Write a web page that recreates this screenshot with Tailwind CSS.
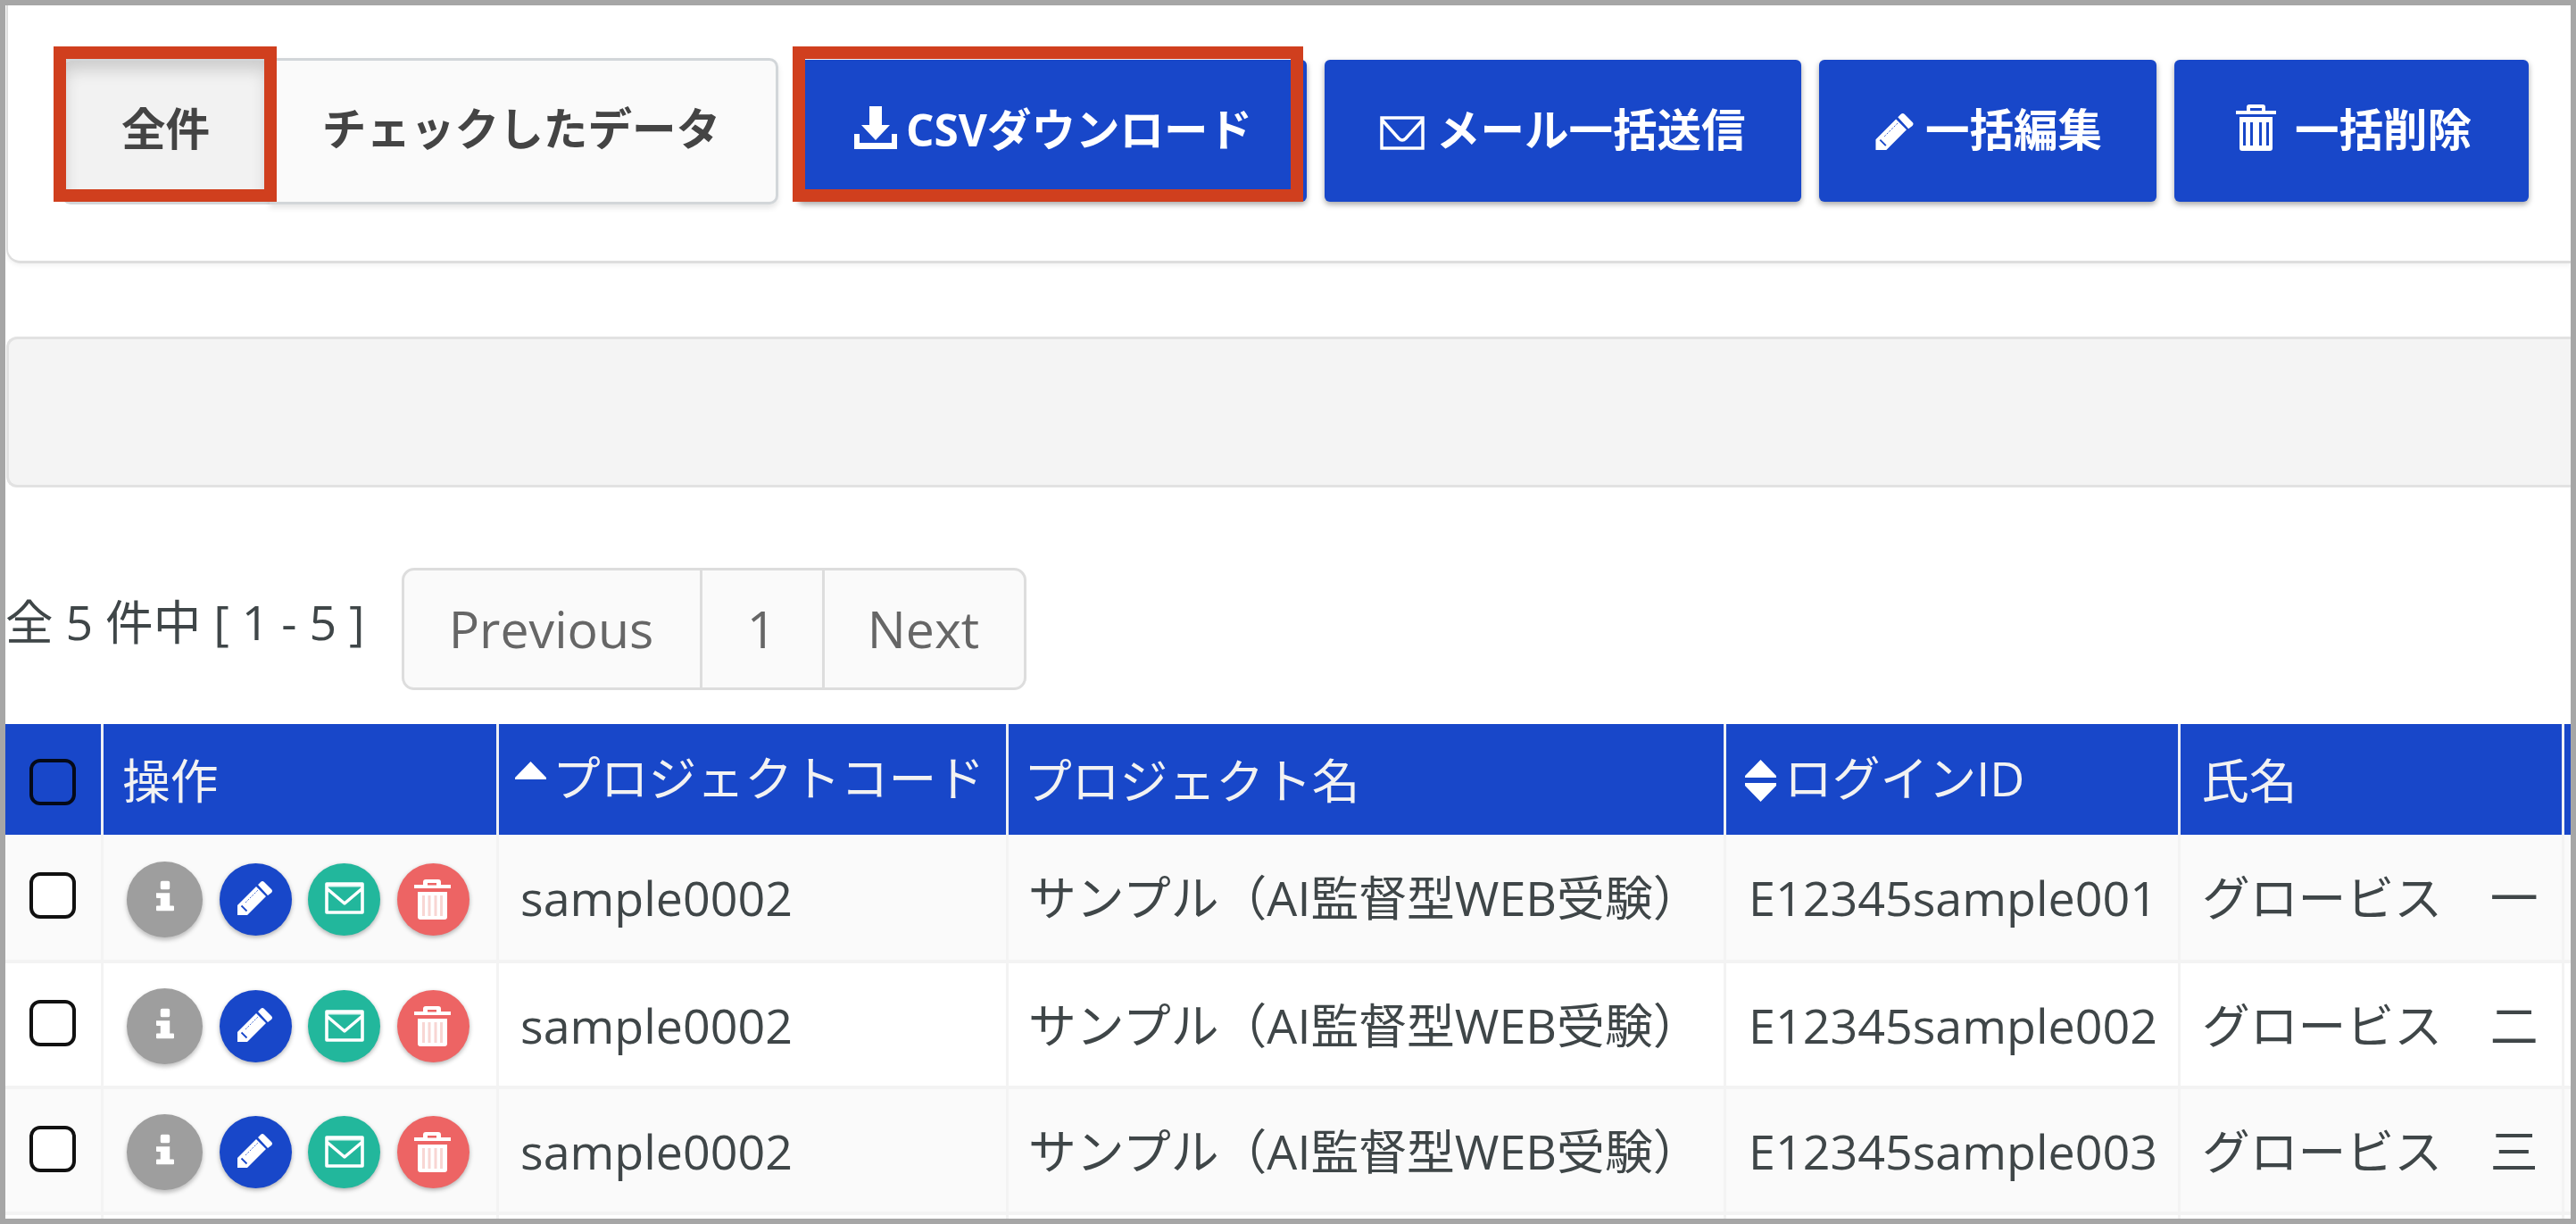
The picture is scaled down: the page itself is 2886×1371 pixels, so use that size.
<!DOCTYPE html>
<html lang="ja">
<head>
    <meta charset="UTF-8">
    <meta name="viewport" content="width=device-width, initial-scale=1.0">
    <title>受験者一覧</title>
    <script src="https://cdn.jsdelivr.net/npm/@tailwindcss/browser@4"></script>
    <style>
        body { font-family: 'Open Sans', 'Noto Sans CJK JP', sans-serif; }
    </style>
</head>
<body class="bg-white text-[#3f4648]">

    <svg class="hidden">
        <symbol id="icon-pencil" viewBox="0 0 39 38">
            <path fill="currentColor" d="M0 38V27L21 6l11 11L11 38zM23 4l3-3q2-2 4 0l8 8q2 2 0 4l-4 3z"/>
            <path fill="none" stroke="#1847c9" stroke-width="1.800" d="M4.500 27.500l6 6"/>
            <path fill="none" stroke="#1847c9" stroke-width=".8" stroke-dasharray="2 1.500" d="M9 24L23 10"/>
        </symbol>
        <symbol id="icon-mail" viewBox="0 0 44 36">
            <path fill="none" stroke="currentColor" stroke-width="3.600" stroke-linejoin="round" d="M2 2h40v32H2zM2 7l20 17L42 7"/>
            <path fill="currentColor" opacity=".85" d="M3 2h38v3.500H3z"/>
        </symbol>
        <symbol id="icon-trash" viewBox="0 0 41 45">
            <path fill="currentColor" d="M0 6h10V3q0-3 3-3h14q3 0 3 3v3h11v4H0zM15 4v2.500h10V4zM4 14h33v28q0 3-3 3H7q-3 0-3-3z" fill-rule="evenodd"/>
            <path stroke="#f8d6d3" stroke-width="3" d="M10.500 18v23M17 18v23M24 18v23M30.500 18v23"/>
        </symbol>
        <symbol id="icon-info" viewBox="0 0 21 35">
            <path fill="currentColor" d="M7 0h7q2 0 2 2v6q0 2-2 2H7q-2 0-2-2V2q0-2 2-2zM0 14h16v15h4q1 0 1 1v4q0 1-1 1H1q-1 0-1-1v-4q0-1 1-1h4v-9H1q-1 0-1-1z"/>
        </symbol>
    </svg>

    <div class="relative w-[2886px] h-[1371px] overflow-hidden border-6 border-[#a6a6a6]">

        <!-- Toolbar -->
        <div class="ml-px h-[289px] pt-[59px] pl-[60px] flex items-start rounded-bl-[16px] border-l-2 border-b-3 border-[#dedede] shadow-[0_2px_5px_rgba(0,0,0,0.06)]">
            <div class="flex w-[803px] h-[164px] mr-[22px] text-[49.600px] font-semibold text-[#444] leading-none whitespace-nowrap">
                <button class="w-[233px] h-full pb-[4px] bg-[#f2f2f2] border-3 border-[#d2d6d9] rounded-l-[10px] shadow-[inset_0_10px_18px_rgba(0,0,0,0.16)]">全件</button>
                <button class="flex-1 h-full pb-[4px] pr-[3px] bg-[#fafafa] border-3 border-l-0 border-[#d2d6d9] rounded-r-[10px] shadow-[0_4px_6px_rgba(0,0,0,0.10)]">チェックしたデータ</button>
            </div>
            <div class="flex gap-[20px] pt-[2px] text-[49.500px] font-bold text-white leading-none whitespace-nowrap">
                <button class="flex items-center w-[570px] h-[159px] pl-[63px] pb-[1px] bg-[#1847c9] rounded-[6px] shadow-[0_3px_6px_rgba(0,0,0,0.35)]">
                    <svg class="w-[48px] h-[48px] mr-[10px] -mt-[7px]" viewBox="0 0 48 48"><path fill="currentColor" d="M17 0h14v21h9L24 38 8 21h9zM0 31h6v10h36V31h6v17H0z"/></svg>CSVダウンロード
                </button>
                <button class="flex items-center w-[534px] h-[159px] pl-[62px] pb-[1px] bg-[#1847c9] rounded-[6px] shadow-[0_3px_6px_rgba(0,0,0,0.35)]">
                    <svg class="w-[50px] h-[38px] mr-[13px] mt-[5px]" viewBox="0 0 50 38"><path fill="none" stroke="currentColor" stroke-width="3.500" d="M2 2h46v34H2zM2 4l19 21q4 4 8 0L48 4"/></svg>メール一括送信
                </button>
                <button class="flex items-center w-[378px] h-[159px] pl-[62px] pb-[1px] bg-[#1847c9] rounded-[6px] shadow-[0_3px_6px_rgba(0,0,0,0.35)]">
                    <svg class="w-[45px] h-[41px] mr-[12px] mt-[2px]"><use href="#icon-pencil"/></svg>一括編集
                </button>
                <button class="flex items-center w-[397px] h-[159px] pl-[69px] pb-[1px] bg-[#1847c9] rounded-[6px] shadow-[0_3px_6px_rgba(0,0,0,0.35)]">
                    <svg class="w-[45px] h-[52px] mr-[21px] -mt-[7px]" viewBox="0 0 45 52"><path fill="currentColor" fill-rule="evenodd" d="M0 7h12V3q0-3 3-3h15q3 0 3 3v4h12v4H0zM16 4v3h13V4zM4 14h37v35q0 3-3 3H7q-3 0-3-3zM8 20v26h3V20zM16 20v26h3V20zM26 20v26h3V20zM34 20v26h3V20z"/></svg>一括削除
                </button>
            </div>
        </div>

        <!-- Filter bar -->
        <div class="mt-[82px] ml-px h-[169px] bg-[#f4f4f4] border-3 border-r-0 border-[#e2e2e2] rounded-l-[12px]"></div>

        <!-- Pager -->
        <div class="flex items-center mt-[90px] h-[137px]">
            <div class="w-[444px] pb-[15px] text-[53.600px] leading-none whitespace-nowrap">全 5 件中 [ 1 - 5 ]</div>
            <div class="flex h-full text-[57.200px] leading-none text-[#666] bg-[#fafafa] border-3 border-[#ddd] rounded-[14px]">
                <a class="flex items-center justify-center w-[334px] pr-[2px] border-r-3 border-[#ddd]">Previous</a>
                <a class="flex items-center justify-center w-[137px] pr-[2px] border-r-3 border-[#ddd]">1</a>
                <a class="flex items-center justify-center w-[223px] pr-[2px]">Next</a>
            </div>
        </div>

        <!-- Table -->
        <div class="mt-[38px] text-[53.800px] leading-none whitespace-nowrap">
            <div class="grid grid-cols-[110px_443px_571px_804px_509px_430px_7px] h-[124px] bg-[#1847c9] text-[#f2f2f2]">
                <div class="flex items-center pl-[27px] pt-[6px] border-r-3 border-[#eef0f4]"><span class="size-[52px] border-4 border-[#050a18] rounded-[12px]"></span></div>
                <div class="flex items-center pl-[21px] pt-[4px] border-r-3 border-[#eef0f4]">操作</div>
                <div class="flex items-center pl-[18px] pb-[3px] border-r-3 border-[#eef0f4]">
                    <svg class="w-[35px] h-[20px] mr-[7px] -mt-[18px]" viewBox="0 0 35 20"><path fill="#fff" d="M17.500 0L35 18v2H0v-2z"/></svg>プロジェクトコード
                </div>
                <div class="flex items-center pl-[17px] pt-[4px] border-r-3 border-[#eef0f4]">プロジェクト名</div>
                <div class="flex items-center pl-[21px] pb-[3px] border-r-3 border-[#eef0f4]">
                    <svg class="w-[35px] h-[47px] mr-[9px] mt-[6px]" viewBox="0 0 35 47"><path fill="#fff" d="M17.500 0L35 18v2H0v-2zM17.500 47L35 29v-3H0v3z"/></svg>ログインID
                </div>
                <div class="flex items-center pl-[23px] pt-[4px] border-r-3 border-[#eef0f4]">氏名</div>
                <div></div>
            </div>
            <div id="rows"></div>
        </div>

        <!-- Callout frames -->
        <div class="absolute left-[54px] top-[46px] w-[250px] h-[174px] border-14 border-[#d03f1e]"></div>
        <div class="absolute left-[882px] top-[46px] w-[572px] h-[174px] border-14 border-[#d03f1e]"></div>
    </div>

    <script>
        const rows = [
            { code: 'sample0002', project: 'サンプル（AI監督型WEB受験）', login: 'E12345sample001', name: 'グロービス　一', css: 'h-[144px] bg-[#fafafa]' },
            { code: 'sample0002', project: 'サンプル（AI監督型WEB受験）', login: 'E12345sample002', name: 'グロービス　二', css: 'h-[141px] bg-white' },
            { code: 'sample0002', project: 'サンプル（AI監督型WEB受験）', login: 'E12345sample003', name: 'グロービス　三', css: 'h-[141px] bg-[#fafafa]' },
            { code: '', project: '', login: '', name: '', css: 'h-[4px] bg-white', empty: true }
        ];

        const actions = `
            <span class="flex items-center justify-center size-[85px] pb-[7px] rounded-full bg-[#9e9e9e] text-white shadow-[0_3px_5px_rgba(0,0,0,0.25)]"><svg class="w-[20px] h-[35px]"><use href="#icon-info"/></svg></span>
            <span class="flex items-center justify-center size-[81px] pb-[3px] pr-[2px] ml-[19px] rounded-full bg-[#1847c9] text-white shadow-[0_2px_5px_rgba(0,0,0,0.3)]"><svg class="w-[39px] h-[38px]"><use href="#icon-pencil"/></svg></span>
            <span class="flex items-center justify-center size-[81px] pb-[2px] ml-[18px] rounded-full bg-[#22b79c] text-white shadow-[0_2px_5px_rgba(0,0,0,0.3)]"><svg class="w-[44px] h-[36px]"><use href="#icon-mail"/></svg></span>
            <span class="flex items-center justify-center size-[81px] pr-[3px] ml-[19px] rounded-full bg-[#ed6464] text-white shadow-[0_2px_5px_rgba(0,0,0,0.3)]"><svg class="w-[41px] h-[45px]"><use href="#icon-trash"/></svg></span>`;

        document.getElementById('rows').innerHTML = rows.map(row => `
            <div class="grid grid-cols-[110px_443px_571px_804px_509px_430px_7px] overflow-hidden ${row.css}">
                <div class="flex items-center pl-[27px] pb-[4px] border-r-3 border-b-4 border-[#f3f3f3]">${row.empty ? '' : '<span class="size-[52px] border-4 border-[#111] rounded-[12px] bg-white"></span>'}</div>
                <div class="flex items-center pl-[26px] pt-[4px] border-r-3 border-b-4 border-[#f3f3f3]">${row.empty ? '' : actions}</div>
                <div class="flex items-center pl-[24px] pt-[2px] border-r-3 border-b-4 border-[#f3f3f3]">${row.code}</div>
                <div class="flex items-center pl-[22px] pt-[2px] border-r-3 border-b-4 border-[#f3f3f3]">${row.project}</div>
                <div class="flex items-center pl-[25px] pt-[2px] border-r-3 border-b-4 border-[#f3f3f3]">${row.login}</div>
                <div class="flex items-center pl-[24px] pt-[2px] border-r-3 border-b-4 border-[#f3f3f3]">${row.name}</div>
                <div class="border-b-4 border-[#f3f3f3]"></div>
            </div>
        `).join('');
    </script>
</body>
</html>
